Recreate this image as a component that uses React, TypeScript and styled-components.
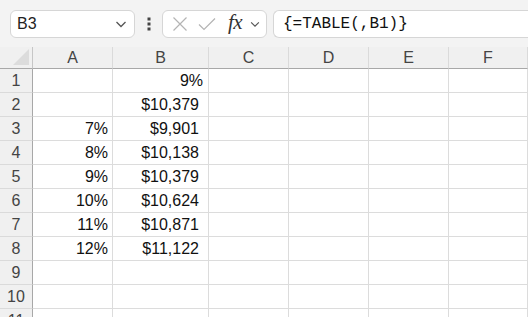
import { Fragment } from "react";
import styled, { createGlobalStyle } from "styled-components";

const GlobalStyle = createGlobalStyle`
    html, body {
        margin: 0;
        padding: 0;
        background: #ffffff;
        overflow: hidden;
    }
`;

const Page = styled.div`
    width: 528px;
    height: 317px;
    display: flex;
    flex-direction: column;
    font-family: "Liberation Sans", Arial, sans-serif;
    overflow: hidden;
`;

const FormulaBar = styled.div`
    height: 47px;
    flex-shrink: 0;
    display: flex;
    align-items: center;
    padding-left: 10px;
    background: #f3f3f3;
    box-sizing: border-box;
`;

const Box = styled.div<{ $width?: number }>`
    height: 28px;
    box-sizing: border-box;
    background: #ffffff;
    border: 1px solid #d6d6d6;
    border-radius: 6px;
    display: flex;
    align-items: center;
    width: ${(p) => (p.$width ? `${p.$width}px` : "auto")};
    flex: ${(p) => (p.$width ? "none" : "1")};
`;

const NameBox = styled(Box)`
    padding: 0 6px 0 6px;
    justify-content: space-between;
    font-size: 16px;
    color: #222;
`;

const Dots = styled.div`
    width: 27px;
    display: flex;
    justify-content: center;
`;

const Tools = styled(Box)`
    padding-left: 5px;
    margin-right: 6px;
`;

const ToolIcon = styled.span<{ $w: number }>`
    width: ${(p) => p.$w}px;
    display: flex;
    align-items: center;
    justify-content: center;
`;

const Fx = styled.span`
    font-family: "Liberation Serif", "Times New Roman", serif;
    font-style: italic;
    font-size: 21px;
    color: #333;
    width: 26px;
    text-align: center;
    letter-spacing: -0.5px;
    margin-bottom: 2px;
`;

const FormulaInput = styled(Box)`
    border-right: none;
    border-radius: 6px 0 0 6px;
    padding-left: 9px;
    font-family: "Liberation Mono", "DejaVu Sans Mono", monospace;
    font-size: 16px;
    color: #111;
`;

const Sheet = styled.div`
    display: grid;
    grid-template-columns: 33px 80px 96px 80px 80px 80px 1fr;
    grid-template-rows: 22px;
    grid-auto-rows: 24px;
    font-size: 16px;
    color: #111;
`;

const Corner = styled.div`
    background: #f0f0f0;
    border-right: 1px solid #c6c6c6;
    border-bottom: 1px solid #a8a8a8;
    position: relative;
    &::after {
        content: "";
        position: absolute;
        right: 3px;
        bottom: 3px;
        width: 0;
        height: 0;
        border-left: 16px solid transparent;
        border-bottom: 16px solid #dcdcdc;
    }
`;

const ColHead = styled.div`
    background: #f0f0f0;
    border-right: 1px solid #dadada;
    border-bottom: 1px solid #a8a8a8;
    display: flex;
    align-items: center;
    justify-content: center;
    color: #444;
    font-size: 16px;
`;

const RowHead = styled.div`
    background: #f0f0f0;
    border-right: 1px solid #a8a8a8;
    border-bottom: 1px solid #dadada;
    display: flex;
    align-items: center;
    justify-content: center;
    color: #444;
`;

const Cell = styled.div<{ $pad: number }>`
    border-right: 1px solid #dcdcdc;
    border-bottom: 1px solid #dcdcdc;
    display: flex;
    align-items: center;
    justify-content: flex-end;
    padding-right: ${(p) => p.$pad}px;
    white-space: nowrap;
`;

const Chevron = ({ size = 14 }: { size?: number }) => (
    <svg width={size} height={size} viewBox="0 0 14 14" fill="none">
        <path d="M2.5 5 L7 9.5 L11.5 5" stroke="#555" strokeWidth="1.3" />
    </svg>
);

const columns = ["A", "B", "C", "D", "E", "F"];

const rows: [string, string][] = [
    ["", "9%"],
    ["", "$10,379"],
    ["7%", "$9,901"],
    ["8%", "$10,138"],
    ["9%", "$10,379"],
    ["10%", "$10,624"],
    ["11%", "$10,871"],
    ["12%", "$11,122"],
    ["", ""],
    ["", ""],
    ["", ""],
];

export default function App() {
    return (
        <Page>
            <GlobalStyle />
            <FormulaBar>
                <NameBox $width={125}>
                    <span>B3</span>
                    <Chevron />
                </NameBox>
                <Dots>
                    <svg width="4" height="14" viewBox="0 0 4 14">
                        <rect x="0.5" y="0.5" width="3" height="3" fill="#444" />
                        <rect x="0.5" y="5.5" width="3" height="3" fill="#444" />
                        <rect x="0.5" y="10.5" width="3" height="3" fill="#444" />
                    </svg>
                </Dots>
                <Tools $width={105}>
                    <ToolIcon $w={24}>
                        <svg width="16" height="16" viewBox="0 0 16 16">
                            <path d="M1.5 1.5 L14.5 14.5 M14.5 1.5 L1.5 14.5" stroke="#b4b4b4" strokeWidth="1.2" />
                        </svg>
                    </ToolIcon>
                    <ToolIcon $w={30}>
                        <svg width="18" height="14" viewBox="0 0 18 14">
                            <path d="M1 7.5 L6 12.5 L17 1.5" stroke="#b4b4b4" strokeWidth="1.2" fill="none" />
                        </svg>
                    </ToolIcon>
                    <Fx>fx</Fx>
                    <ToolIcon $w={14}>
                        <Chevron size={12} />
                    </ToolIcon>
                </Tools>
                <FormulaInput>{"{=TABLE(,B1)}"}</FormulaInput>
            </FormulaBar>
            <Sheet>
                <Corner />
                {columns.map((c) => (
                    <ColHead key={c}>{c}</ColHead>
                ))}
                {rows.map((r, i) => (
                    <Fragment key={i}>
                        <RowHead>{i + 1}</RowHead>
                        <Cell $pad={4}>{r[0]}</Cell>
                        <Cell $pad={r[1].startsWith("$") ? 9 : 5}>{r[1]}</Cell>
                        <Cell $pad={0} />
                        <Cell $pad={0} />
                        <Cell $pad={0} />
                        <Cell $pad={0} />
                    </Fragment>
                ))}
            </Sheet>
        </Page>
    );
}
